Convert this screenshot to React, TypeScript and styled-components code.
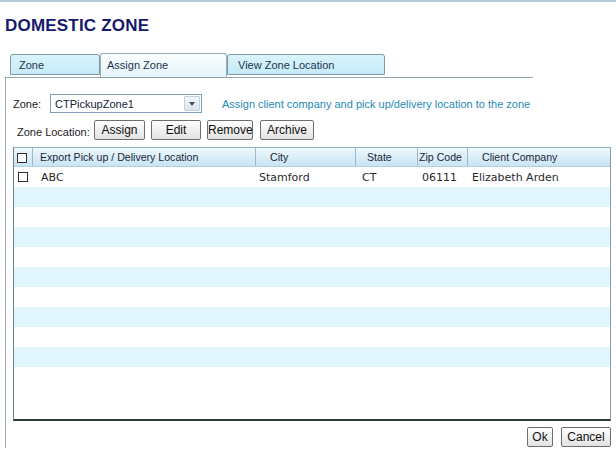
import React from "react";
import styled, { createGlobalStyle } from "styled-components";

const GlobalStyle = createGlobalStyle`
  body {
    margin: 0;
    background: #ffffff;
    font-family: "Liberation Sans", Arial, sans-serif;
  }
`;

type Col = { w: string; headPad: number; cellPad: number };

const cols: Col[] = [
  { w: "19px", headPad: 3, cellPad: 4 },
  { w: "223px", headPad: 7, cellPad: 8 },
  { w: "100px", headPad: 14, cellPad: 3 },
  { w: "62px", headPad: 11, cellPad: 6 },
  { w: "50px", headPad: 1, cellPad: 4 },
  { w: "1fr", headPad: 14, cellPad: 4 },
];

const headers = ["Export Pick up / Delivery Location", "City", "State", "Zip Code", "Client Company"];
const rows = [["ABC", "Stamford", "CT", "06111", "Elizabeth Arden"]];
const EMPTY_ROWS = 9;

export default function App() {
  return (
    <Page>
      <GlobalStyle />
      <Title>DOMESTIC ZONE</Title>

      <TabBar>
        <Tab $width={90}>Zone</Tab>
        <Tab $width={127} $active>Assign Zone</Tab>
        <Tab $width={158} $pad={10}>View Zone Location</Tab>
      </TabBar>

      <Panel>
        <ZoneRow>
          <Label $width={37}>Zone:</Label>
          <Select>
            <SelectText>CTPickupZone1</SelectText>
            <Arrow>
              <Triangle />
            </Arrow>
          </Select>
          <Hint>Assign client company and pick up/delivery location to the zone</Hint>
        </ZoneRow>

        <LocationRow>
          <Label $width={75} $indent={4} $drop={2}>Zone Location:</Label>
          <Button $w={51}>Assign</Button>
          <Button $w={50}>Edit</Button>
          <Button $w={46}>Remove</Button>
          <Button $w={54} $gap={1}>Archive</Button>
        </LocationRow>

        <Table>
          <HeadRow>
            <HeadCell $pad={cols[0].headPad}>
              <Check $top={1} />
            </HeadCell>
            {headers.map((h, i) => (
              <HeadCell key={h} $pad={cols[i + 1].headPad} $last={i === headers.length - 1}>
                {h}
              </HeadCell>
            ))}
          </HeadRow>
          {rows.map((r, ri) => (
            <Row key={ri} $striped={false}>
              <Cell $pad={cols[0].cellPad}>
                <Check />
              </Cell>
              {r.map((v, i) => (
                <Cell key={i} $pad={cols[i + 1].cellPad}>
                  {v}
                </Cell>
              ))}
            </Row>
          ))}
          {Array.from({ length: EMPTY_ROWS }).map((_, i) => (
            <Row key={"e" + i} $striped={i % 2 === 0} />
          ))}
        </Table>

        <Footer>
          <Button $w={26}>Ok</Button>
          <Button $w={50}>Cancel</Button>
        </Footer>
      </Panel>
    </Page>
  );
}

const Page = styled.div`
  width: 616px;
  height: 453px;
  box-sizing: border-box;
  border-top: 2px solid #b6cedb;
  overflow: hidden;
`;

const Title = styled.h1`
  margin: 14px 0 0 5px;
  font-size: 17px;
  line-height: 20px;
  font-weight: bold;
  color: #17196e;
  letter-spacing: 0.2px;
`;

const TabBar = styled.div`
  margin: 17px 0 0 5px;
  width: 523px;
  height: 24px;
  padding-left: 5px;
  box-sizing: content-box;
  display: flex;
  align-items: flex-end;
  border-bottom: 1px solid #8ea6b0;
`;

const Tab = styled.div<{ $width: number; $active?: boolean; $pad?: number }>`
  width: ${(p) => p.$width}px;
  height: ${(p) => (p.$active ? 24 : 21)}px;
  margin-bottom: ${(p) => (p.$active ? 0 : 2)}px;
  box-sizing: border-box;
  display: flex;
  align-items: center;
  padding-left: ${(p) => p.$pad ?? (p.$active ? 6 : 8)}px;
  padding-bottom: ${(p) => (p.$active ? 2 : 0)}px;
  font-size: 11px;
  color: #1b3550;
  border: 1px solid ${(p) => (p.$active ? "#98aeb8" : "#7d98a4")};
  border-bottom: ${(p) => (p.$active ? "none" : "1px solid #7d98a4")};
  border-radius: 3px 3px 0 0;
  background: ${(p) =>
    p.$active
      ? "linear-gradient(#fbfdfe, #e4f4fa)"
      : "linear-gradient(#d9f3fc, #c6ebf8)"};
`;

const Panel = styled.div`
  margin-left: 5px;
  height: 370px;
  border-left: 1px solid #9aacb4;
  padding: 16px 0 0 7px;
  box-sizing: border-box;
`;

const ZoneRow = styled.div`
  display: flex;
  align-items: center;
  height: 19px;
`;

const Label = styled.span<{ $width: number; $indent?: number; $drop?: number }>`
  width: ${(p) => p.$width}px;
  padding-left: ${(p) => p.$indent ?? 0}px;
  box-sizing: border-box;
  font-size: 11px;
  color: #1a1a1a;
  position: relative;
  top: ${(p) => p.$drop ?? 0}px;
  white-space: nowrap;
`;

const Select = styled.div`
  width: 152px;
  height: 19px;
  box-sizing: border-box;
  border: 1px solid #7f9db9;
  background: #fff;
  display: flex;
  align-items: center;
`;

const SelectText = styled.span`
  flex: 1;
  padding-left: 4px;
  font-size: 11px;
  color: #15233a;
`;

const Arrow = styled.span`
  width: 16px;
  height: 15px;
  margin-right: 1px;
  box-sizing: border-box;
  border: 1px solid #c3d1de;
  border-radius: 1px;
  background: linear-gradient(#f5f8fb, #dce5ee);
  display: flex;
  align-items: center;
  justify-content: center;
`;

const Triangle = styled.span`
  width: 0;
  height: 0;
  border-left: 3.5px solid transparent;
  border-right: 3.5px solid transparent;
  border-top: 4px solid #3d5268;
`;

const Hint = styled.span`
  margin-left: 20px;
  font-size: 11px;
  color: #1f8ab4;
  white-space: nowrap;
`;

const LocationRow = styled.div`
  display: flex;
  align-items: center;
  gap: 6px;
  height: 19px;
  margin-top: 7px;
`;

const Button = styled.button<{ $w: number; $gap?: number }>`
  width: ${(p) => p.$w}px;
  height: 20px;
  margin-left: ${(p) => p.$gap ?? 0}px;
  padding: 0;
  box-sizing: border-box;
  font-family: "Liberation Sans", Arial, sans-serif;
  font-size: 12px;
  color: #111;
  border: 1px solid #6e6e6e;
  border-radius: 2px;
  background: linear-gradient(#ffffff, #e2e2e2);
`;

const Table = styled.div`
  margin-top: 8px;
  width: 598px;
  height: 274px;
  box-sizing: border-box;
  border-top: 1px solid #8fb0c4;
  border-left: 1px solid #6f8088;
  border-right: 1px solid #8a9ca4;
  border-bottom: 2px solid #2d3b3d;
  background: #fff;
`;

const gridCols = cols.map((c) => c.w).join(" ");

const HeadRow = styled.div`
  display: grid;
  grid-template-columns: ${gridCols};
  height: 19px;
  box-sizing: border-box;
  border-bottom: 1px solid #b3cfdd;
  background: linear-gradient(#eff8fd, #c8e4f3);
`;

const HeadCell = styled.div<{ $pad: number; $last?: boolean }>`
  display: flex;
  align-items: center;
  padding-left: ${(p) => p.$pad}px;
  border-right: ${(p) => (p.$last ? "none" : "1px solid #9dbacb")};
  font-size: 10.6px;
  color: #1a2638;
  white-space: nowrap;
  overflow: hidden;
`;

const Row = styled.div<{ $striped: boolean }>`
  display: grid;
  grid-template-columns: ${gridCols};
  height: 20px;
  background: ${(p) => (p.$striped ? "#e1f5fc" : "#ffffff")};
`;

const Cell = styled.div<{ $pad: number }>`
  display: flex;
  align-items: center;
  padding-left: ${(p) => p.$pad}px;
  font-family: "DejaVu Sans", Verdana, sans-serif;
  font-size: 11px;
  color: #2a2a2a;
  white-space: nowrap;
`;

const Check = styled.span<{ $top?: number }>`
  width: 10px;
  height: 10px;
  box-sizing: border-box;
  border: 1px solid #2f2f2f;
  background: #fff;
  position: relative;
  top: ${(p) => p.$top ?? 0}px;
`;

const Footer = styled.div`
  width: 598px;
  margin-top: 6px;
  display: flex;
  justify-content: flex-end;
  gap: 8px;
`;
